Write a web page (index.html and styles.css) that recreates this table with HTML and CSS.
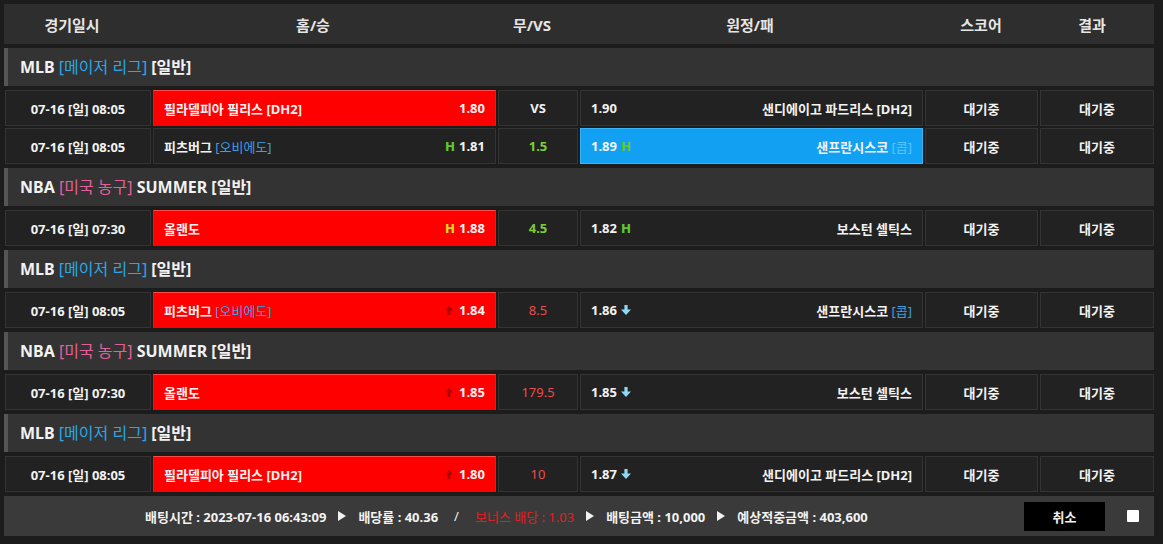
FILE: index.html
```html
<!DOCTYPE html>
<html lang="ko">
<head>
<meta charset="utf-8">
<title>배팅내역</title>
<link rel="stylesheet" href="styles.css">
</head>
<body>
<div class="board">
  <div class="thead">
    <div>경기일시</div>
    <div>홈/승</div>
    <div>무/VS</div>
    <div>원정/패</div>
    <div>스코어</div>
    <div>결과</div>
  </div>

  <div class="league"><b>MLB</b> <span class="tag-blue">[메이저 리그]</span> <b>[일반]</b></div>
  <div class="row">
    <div class="cell date">07-16 [일] 08:05</div>
    <div class="cell team home picked-red"><span class="name">필라델피아 필리스 [DH2]</span><span class="odds">1.80</span></div>
    <div class="cell draw">VS</div>
    <div class="cell team away"><span class="odds">1.90</span><span class="name">샌디에이고 파드리스 [DH2]</span></div>
    <div class="cell status">대기중</div>
    <div class="cell status">대기중</div>
  </div>
  <div class="row">
    <div class="cell date">07-16 [일] 08:05</div>
    <div class="cell team home"><span class="name">피츠버그 <span class="sub">[오비에도]</span></span><span class="odds"><i class="h">H</i>1.81</span></div>
    <div class="cell draw green">1.5</div>
    <div class="cell team away picked-blue"><span class="odds">1.89<i class="h">H</i></span><span class="name">샌프란시스코 <span class="sub light">[콥]</span></span></div>
    <div class="cell status">대기중</div>
    <div class="cell status">대기중</div>
  </div>

  <div class="league"><b>NBA</b> <span class="tag-pink">[미국 농구]</span> <b>SUMMER [일반]</b></div>
  <div class="row">
    <div class="cell date">07-16 [일] 07:30</div>
    <div class="cell team home picked-red"><span class="name">올랜도</span><span class="odds"><i class="h">H</i>1.88</span></div>
    <div class="cell draw green">4.5</div>
    <div class="cell team away"><span class="odds">1.82<i class="h">H</i></span><span class="name">보스턴 셀틱스</span></div>
    <div class="cell status">대기중</div>
    <div class="cell status">대기중</div>
  </div>

  <div class="league"><b>MLB</b> <span class="tag-blue">[메이저 리그]</span> <b>[일반]</b></div>
  <div class="row">
    <div class="cell date">07-16 [일] 08:05</div>
    <div class="cell team home picked-red"><span class="name">피츠버그 <span class="sub">[오비에도]</span></span><span class="odds"><svg class="up" viewBox="0 0 8 9" width="8" height="9"><path d="M4 0 L8 4.5 L5.3 4.5 L5.3 9 L2.7 9 L2.7 4.5 L0 4.5 Z"/></svg>1.84</span></div>
    <div class="cell draw red">8.5</div>
    <div class="cell team away"><span class="odds">1.86<svg class="down" viewBox="0 0 10 10" width="10" height="10"><path d="M3.4 0 H6.6 V4.6 H10 L5 10 L0 4.6 H3.4 Z"/></svg></span><span class="name">샌프란시스코 <span class="sub">[콥]</span></span></div>
    <div class="cell status">대기중</div>
    <div class="cell status">대기중</div>
  </div>

  <div class="league"><b>NBA</b> <span class="tag-pink">[미국 농구]</span> <b>SUMMER [일반]</b></div>
  <div class="row">
    <div class="cell date">07-16 [일] 07:30</div>
    <div class="cell team home picked-red"><span class="name">올랜도</span><span class="odds"><svg class="up" viewBox="0 0 8 9" width="8" height="9"><path d="M4 0 L8 4.5 L5.3 4.5 L5.3 9 L2.7 9 L2.7 4.5 L0 4.5 Z"/></svg>1.85</span></div>
    <div class="cell draw red">179.5</div>
    <div class="cell team away"><span class="odds">1.85<svg class="down" viewBox="0 0 10 10" width="10" height="10"><path d="M3.4 0 H6.6 V4.6 H10 L5 10 L0 4.6 H3.4 Z"/></svg></span><span class="name">보스턴 셀틱스</span></div>
    <div class="cell status">대기중</div>
    <div class="cell status">대기중</div>
  </div>

  <div class="league"><b>MLB</b> <span class="tag-blue">[메이저 리그]</span> <b>[일반]</b></div>
  <div class="row">
    <div class="cell date">07-16 [일] 08:05</div>
    <div class="cell team home picked-red"><span class="name">필라델피아 필리스 [DH2]</span><span class="odds"><svg class="up" viewBox="0 0 8 9" width="8" height="9"><path d="M4 0 L8 4.5 L5.3 4.5 L5.3 9 L2.7 9 L2.7 4.5 L0 4.5 Z"/></svg>1.80</span></div>
    <div class="cell draw red">10</div>
    <div class="cell team away"><span class="odds">1.87<svg class="down" viewBox="0 0 10 10" width="10" height="10"><path d="M3.4 0 H6.6 V4.6 H10 L5 10 L0 4.6 H3.4 Z"/></svg></span><span class="name">샌디에이고 파드리스 [DH2]</span></div>
    <div class="cell status">대기중</div>
    <div class="cell status">대기중</div>
  </div>

  <div class="footer">
    <div class="summary">
      <span>배팅시간 : 2023-07-16 06:43:09</span>
      <svg class="tri" viewBox="0 0 8 10" width="8" height="10"><path d="M0 0 L8 5 L0 10 Z"/></svg>
      <span>배당률 : 40.36</span>
      <span class="slash">/</span>
      <span class="bonus">보너스 배당 : 1.03</span>
      <svg class="tri" viewBox="0 0 8 10" width="8" height="10"><path d="M0 0 L8 5 L0 10 Z"/></svg>
      <span>배팅금액 : 10,000</span>
      <svg class="tri" viewBox="0 0 8 10" width="8" height="10"><path d="M0 0 L8 5 L0 10 Z"/></svg>
      <span>예상적중금액 : 403,600</span>
    </div>
    <button class="cancel" type="button">취소</button>
    <span class="check"></span>
  </div>
</div>
</body>
</html>
```
FILE: styles.css
```css
* { box-sizing: border-box; }

html, body {
  margin: 0;
  padding: 0;
  background: #1c1c1c;
}

body {
  font-family: "Noto Sans", "Noto Sans CJK KR", sans-serif;
  color: #f0f0f0;
  font-size: 13px;
}

.board {
  width: 1154px;
  padding: 4px 0 0 4px;
}

.thead {
  display: grid;
  grid-template-columns: 136px 346px 92px 344px 118px 104px;
  height: 40px;
  background: #2e2e2e;
  margin-bottom: 4px;
}

.thead div {
  display: flex;
  align-items: center;
  justify-content: center;
  font-size: 15px;
  font-weight: 700;
  color: #e6e6e6;
}

.league {
  height: 38px;
  line-height: 38px;
  background: #333333;
  border-left: 4px solid #555555;
  padding-left: 12px;
  font-size: 16px;
  margin-bottom: 4px;
  white-space: nowrap;
}

.league b { font-weight: 700; color: #f2f2f2; }
.tag-blue { color: #2ba6e6; }
.tag-pink { color: #e2619d; }

.row {
  display: grid;
  grid-template-columns: 146px 343px 80px 343px 113px 114px;
  column-gap: 2px;
  height: 36px;
  padding-left: 1px;
  margin-bottom: 4px;
}

.row + .row { margin-top: -2px; }

.cell {
  background: #222222;
  border: 1px solid #343434;
  display: flex;
  align-items: center;
  font-weight: 700;
  font-size: 13px;
  color: #f2f2f2;
}

.date, .draw, .status { justify-content: center; }

.team {
  justify-content: space-between;
  padding: 0 10px;
}

.sub { color: #3a9fe6; font-weight: 400; }
.sub.light { color: #5cc3ff; }

.odds {
  display: inline-flex;
  align-items: center;
  gap: 4px;
}

.h {
  font-style: normal;
  font-family: "DejaVu Sans", sans-serif;
  color: #62c72e;
  font-size: 12px;
  font-weight: 700;
  margin-top: 2px;
}

.picked-red {
  background: #ff0000;
  border-color: #ff4a4a #ff1010 #ff0000 #ff1010;
}

.picked-red .h { color: #e0d62a; }

.picked-blue {
  background: #12a1f2;
  border-color: #38b4f8;
}

.up { fill: #b00000; margin-right: 2px; }
.down { fill: #8fd7f3; }

.green { color: #7bcf33; }
.red { color: #ee4b4b; font-weight: 400; }

.footer {
  height: 40px;
  background: #3a3a3a;
  display: flex;
  align-items: center;
  padding-left: 141px;
  padding-right: 15px;
}

.summary {
  display: flex;
  align-items: center;
  font-weight: 700;
  color: #f2f2f2;
  font-size: 13px;
}

.summary span { margin: 0 6px; }
.summary span:first-child { margin-left: 0; }
.summary .slash { margin: 0 10px; font-weight: 400; }
.summary .bonus { color: #e02020; font-weight: 400; }
.tri { fill: #f2f2f2; margin: 0 6px; }

.cancel {
  margin-left: auto;
  width: 81px;
  height: 29px;
  background: #000000;
  border: 0;
  color: #f2f2f2;
  font-family: inherit;
  font-size: 13px;
  font-weight: 700;
}

.check {
  width: 12px;
  height: 12px;
  background: #ffffff;
  margin-left: 22px;
  border-radius: 1px;
}
```
